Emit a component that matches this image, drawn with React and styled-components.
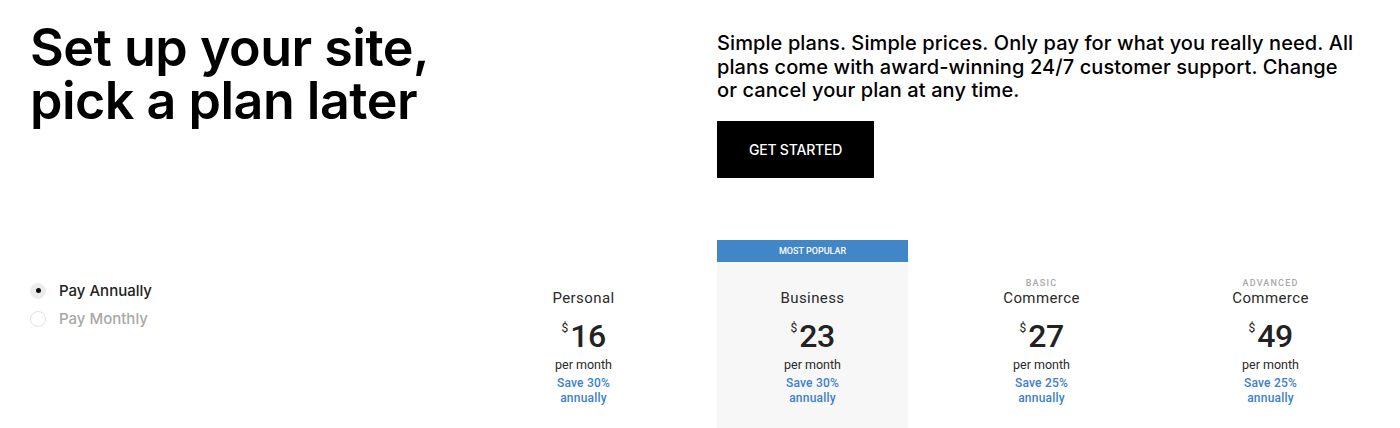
import styled, { createGlobalStyle } from "styled-components";

const GlobalStyle = createGlobalStyle`
  body {
    margin: 0;
    background: #fff;
    font-family: Roboto, "Liberation Sans", Arial, sans-serif;
    color: #000;
  }
`;

// ------ layout ------//
const Page = styled.div`
  width: 1400px;
  height: 428px;
  overflow: hidden;
  padding-left: 30px;
  box-sizing: border-box;
`;

const Hero = styled.section`
  display: grid;
  grid-template-columns: 687px 670px;
  height: 240px;
`;

const Heading = styled.h1`
  margin: 21px 0 0;
  font-family: Inter, "Liberation Sans", sans-serif;
  font-size: 52px;
  line-height: 53px;
  font-weight: 600;
  letter-spacing: -0.5px;
`;

const Intro = styled.div`
  padding-top: 32px;
`;

const Lead = styled.p`
  margin: 0 0 18px;
  font-family: Inter, "Liberation Sans", sans-serif;
  font-size: 20px;
  line-height: 23.5px;
  font-weight: 500;
  letter-spacing: 0.1px;
  white-space: nowrap;
`;

const StartButton = styled.button`
  width: 157px;
  height: 57px;
  border: none;
  background: #000;
  color: #fff;
  font-family: Inter, "Liberation Sans", sans-serif;
  font-size: 14px;
  font-weight: 500;
  letter-spacing: -0.2px;
  cursor: pointer;
`;

const Pricing = styled.section`
  display: flex;
`;

const Billing = styled.div`
  width: 458px;
  padding-top: 41px;
  display: flex;
  flex-direction: column;
  gap: 9px;
`;

const RadioRow = styled.label`
  display: flex;
  align-items: center;
  gap: 13px;
  font-family: Inter, "Liberation Sans", sans-serif;
  font-size: 15px;
  font-weight: 500;
  color: ${(p) => (p.$checked ? "#222" : "#a8a8a8")};
`;

const RadioDot = styled.span`
  width: 16px;
  height: 16px;
  border-radius: 50%;
  box-sizing: border-box;
  display: flex;
  align-items: center;
  justify-content: center;
  background: ${(p) => (p.$checked ? "#ececec" : "#fff")};
  border: 1px solid ${(p) => (p.$checked ? "#ececec" : "#e3e3e3")};
  &::after {
    content: "";
    width: 5px;
    height: 5px;
    border-radius: 50%;
    background: #111;
    display: ${(p) => (p.$checked ? "block" : "none")};
  }
`;

const Plans = styled.div`
  display: grid;
  grid-template-columns: repeat(4, 191px);
  column-gap: 38px;
`;

const PlanCard = styled.div`
  display: flex;
  flex-direction: column;
  align-items: center;
  height: 188px;
  background: ${(p) => (p.$featured ? "#f7f7f7" : "transparent")};
`;

const Banner = styled.div`
  align-self: stretch;
  height: 22px;
  background: ${(p) => (p.$show ? "#4186c6" : "transparent")};
  color: #fff;
  font-size: 9px;
  font-weight: 500;
  display: flex;
  align-items: center;
  justify-content: center;
`;

const Tier = styled.div`
  margin-top: 15px;
  height: 12px;
  font-size: 9px;
  line-height: 12px;
  letter-spacing: 1.2px;
  color: #a9a9a9;
  font-weight: 500;
`;

const PlanName = styled.div`
  font-size: 15px;
  line-height: 18px;
  font-weight: 400;
  color: #2a2a2a;
  letter-spacing: 0.4px;
`;

const Price = styled.div`
  margin-top: 15px;
  display: flex;
  align-items: flex-start;
  color: #222;
  line-height: 1;
`;

const Currency = styled.span`
  font-size: 12px;
  margin-top: 0px;
  margin-right: 2px;
`;

const Amount = styled.span`
  font-size: 32px;
  font-weight: 500;
  letter-spacing: -0.5px;
  line-height: 28px;
`;

const Period = styled.div`
  margin-top: 7px;
  font-size: 12.5px;
  line-height: 15px;
  color: #2a2a2a;
  font-weight: 400;
`;

const Saving = styled.div`
  margin-top: 4px;
  font-size: 12px;
  line-height: 15px;
  color: #3c80cf;
  font-weight: 500;
  text-align: center;
  letter-spacing: 0.2px;
`;

const plans = [
  { name: "Personal", price: 16, save: 30 },
  { name: "Business", price: 23, save: 30, featured: true },
  { name: "Commerce", tier: "BASIC", price: 27, save: 25 },
  { name: "Commerce", tier: "ADVANCED", price: 49, save: 25 },
];

const App = () => {
  return (
    <Page>
      <GlobalStyle />
      <Hero>
        <Heading>
          Set up your site,
          <br />
          pick a plan later
        </Heading>
        <Intro>
          <Lead>
            Simple plans. Simple prices. Only pay for what you really need. All
            <br />
            plans come with award-winning 24/7 customer support. Change
            <br />
            or cancel your plan at any time.
          </Lead>
          <StartButton>GET STARTED</StartButton>
        </Intro>
      </Hero>
      <Pricing>
        <Billing>
          <RadioRow $checked>
            <RadioDot $checked />
            Pay Annually
          </RadioRow>
          <RadioRow>
            <RadioDot />
            Pay Monthly
          </RadioRow>
        </Billing>
        <Plans>
          {plans.map((plan) => (
            <PlanCard key={plan.name + plan.price} $featured={plan.featured}>
              <Banner $show={plan.featured}>{plan.featured && "MOST POPULAR"}</Banner>
              <Tier>{plan.tier}</Tier>
              <PlanName>{plan.name}</PlanName>
              <Price>
                <Currency>$</Currency>
                <Amount>{plan.price}</Amount>
              </Price>
              <Period>per month</Period>
              <Saving>
                Save {plan.save}%
                <br />
                annually
              </Saving>
            </PlanCard>
          ))}
        </Plans>
      </Pricing>
    </Page>
  );
};

export default App;
